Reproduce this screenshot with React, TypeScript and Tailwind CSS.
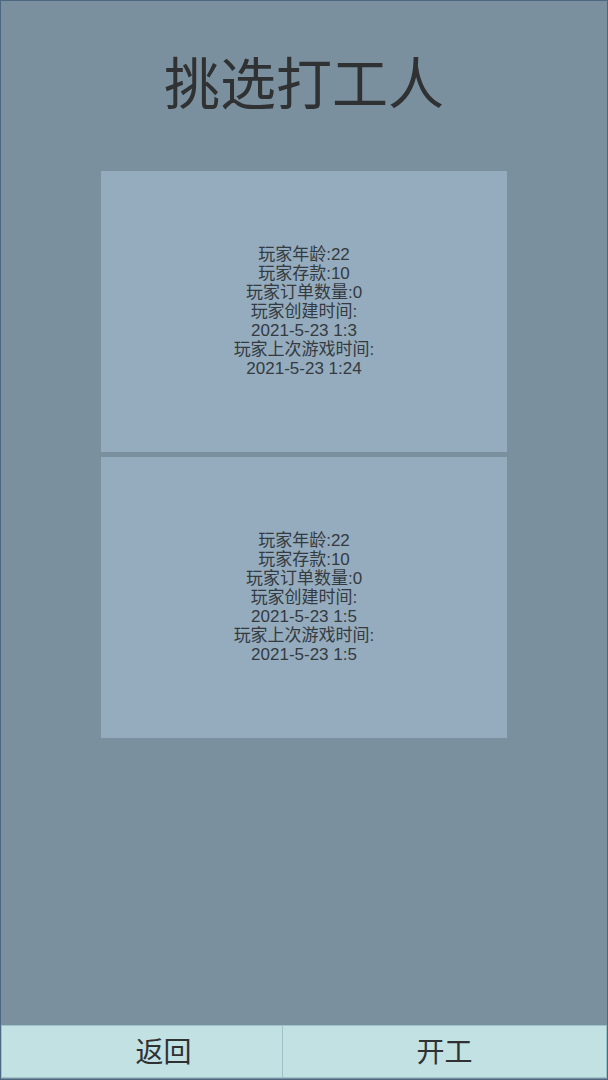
import React from "react";

const lines1 = [
  "玩家年龄:22",
  "玩家存款:10",
  "玩家订单数量:0",
  "玩家创建时间:",
  "2021-5-23 1:3",
  "玩家上次游戏时间:",
  "2021-5-23 1:24",
];
const lines2 = [
  "玩家年龄:22",
  "玩家存款:10",
  "玩家订单数量:0",
  "玩家创建时间:",
  "2021-5-23 1:5",
  "玩家上次游戏时间:",
  "2021-5-23 1:5",
];

function Card({ lines }: { lines: string[] }) {
  return (
    <div className="h-[281px] w-[406px] bg-[#94acbe] flex flex-col items-center justify-center text-[17px] leading-[19px] text-[#343a40]">
      {lines.map((l, i) => (
        <div key={i}>{l}</div>
      ))}
    </div>
  );
}

export default function App() {
  return (
    <div
      className="w-[608px] h-[1080px] border border-[#4e6780] bg-[#7b909f] flex flex-col"
      style={{ fontFamily: '"Liberation Sans", "Noto Sans CJK SC", sans-serif' }}
    >
      <div className="h-[170px] flex items-center justify-center pb-[2px]">
        <h1 className="text-[56px] leading-none text-[#2f3133]">挑选打工人</h1>
      </div>
      <div className="flex flex-col items-center gap-[5px]">
        <Card lines={lines1} />
        <Card lines={lines2} />
      </div>
      <div className="flex-1" />
      <div className="flex h-[53px] mb-[1px]">
        <button className="w-[282px] h-full bg-[#c1e1e3] border border-[#9dc3c9] text-[28px] text-[#2f3133] flex items-center justify-center pl-[43px] pt-[2px]">
          返回
        </button>
        <button className="flex-1 h-full bg-[#c1e1e3] border border-l-0 border-[#9dc3c9] text-[28px] text-[#2f3133] flex items-center justify-center pt-[2px]">
          开工
        </button>
      </div>
    </div>
  );
}
